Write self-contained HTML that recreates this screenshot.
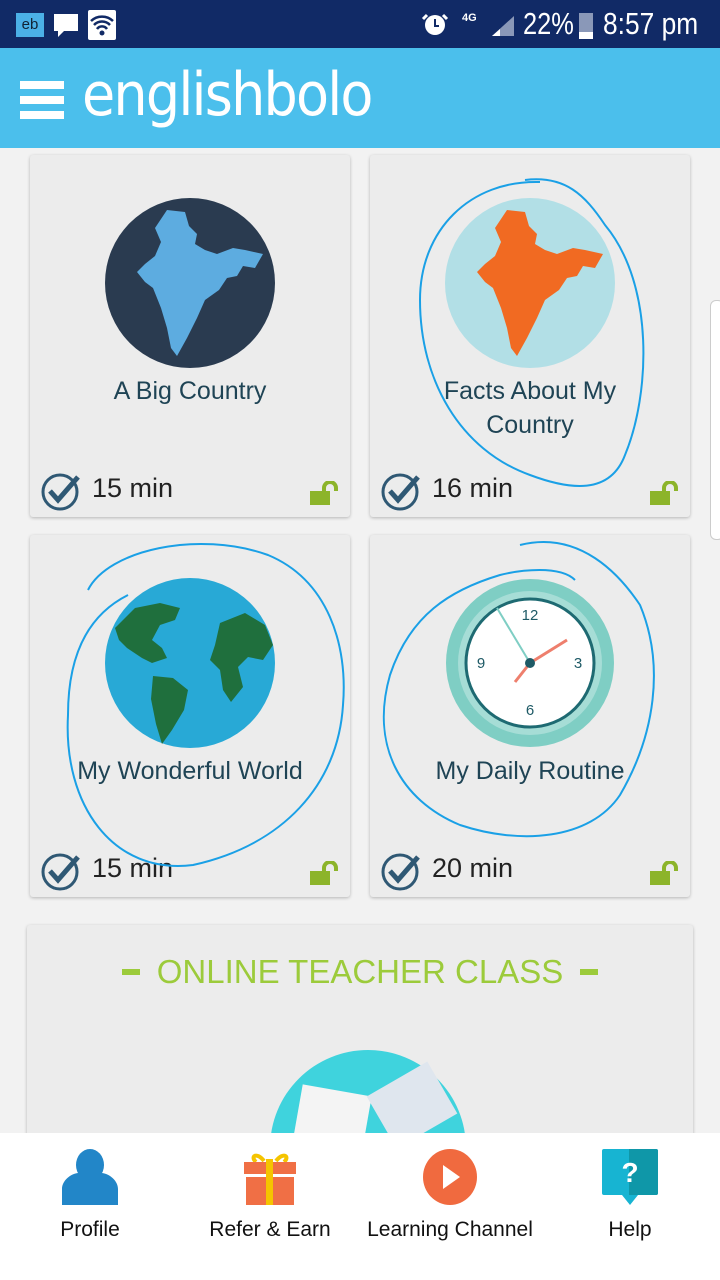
<!DOCTYPE html>
<html><head><meta charset="utf-8"><style>
*{margin:0;padding:0;box-sizing:border-box}
body{width:720px;height:1280px;overflow:hidden;background:#f2f2f2;font-family:"Liberation Sans",sans-serif;position:relative}
.sb{position:absolute;top:0;left:0;width:720px;height:48px;background:#112a66;color:#fff}
.hd{position:absolute;top:48px;left:0;width:720px;height:100px;background:#4bbfec}
.card{position:absolute;width:320px;height:362px;background:#ececec;border-radius:3px;box-shadow:0 1px 3px rgba(0,0,0,.25)}
.t{position:absolute;left:0;width:100%;text-align:center;color:#1f4455;font-size:25px;line-height:34px}
.min{position:absolute;left:62px;top:318px;font-size:27px;color:#222}
.chk{position:absolute;left:10px;top:316px}
.lock{position:absolute;right:10px;top:326px}
.nav{position:absolute;top:1133px;left:0;width:720px;height:147px;background:#fff}
.nl{position:absolute;top:85px;font-size:21px;color:#111;text-align:center;width:200px}
</style></head><body>
<div class="sb">
<div style="position:absolute;left:16px;top:13px;width:28px;height:24px;background:#4bb0e6;color:#123;font-size:15px;text-align:center;line-height:24px">eb</div>
<svg style="position:absolute;left:52px;top:12px" width="28" height="28"><path d="M2 2h24v17H12l-6 6v-6H2z" fill="#fff"/></svg>
<svg style="position:absolute;left:88px;top:10px" width="28" height="30"><rect width="28" height="30" rx="2" fill="#fff"/><path d="M3 11a16 16 0 0 1 22 0M6 15a11 11 0 0 1 16 0M9 19a6 6 0 0 1 10 0" stroke="#112a66" stroke-width="2.5" fill="none"/><circle cx="14" cy="23" r="2.5" fill="#112a66"/></svg>
<svg style="position:absolute;left:421px;top:10px" width="28" height="28"><circle cx="14" cy="15" r="10" fill="#fff"/><path d="M6 5l-4 4M22 5l4 4" stroke="#fff" stroke-width="3"/><path d="M14 9v7h4" stroke="#112a66" stroke-width="2" fill="none"/></svg>
<div style="position:absolute;left:462px;top:12px;font-size:11px;font-weight:bold">4G</div>
<svg style="position:absolute;left:490px;top:14px" width="26" height="24"><path d="M2 22L24 2v20z" fill="#8a98b8"/><path d="M2 22l8-7v7z" fill="#fff"/></svg>
<div style="position:absolute;left:523px;top:6px;font-size:31px;transform:scaleX(.82);transform-origin:left">22%</div>
<div style="position:absolute;left:579px;top:13px;width:14px;height:26px;background:#8a98b8"><div style="position:absolute;bottom:0;width:14px;height:7px;background:#fff"></div></div>
<div style="position:absolute;left:603px;top:6px;font-size:31px;transform:scaleX(.85);transform-origin:left">8:57 pm</div>
</div>
<div class="hd">
<div style="position:absolute;left:20px;top:33px;width:44px;height:8px;background:#fff"></div>
<div style="position:absolute;left:20px;top:48px;width:44px;height:8px;background:#fff"></div>
<div style="position:absolute;left:20px;top:63px;width:44px;height:8px;background:#fff"></div>
<div style="position:absolute;left:82px;top:12px;font-size:60px;color:#fff;font-family:'DejaVu Sans',sans-serif;letter-spacing:-2px;transform:scaleX(.9);transform-origin:left">englishbolo</div>
</div>

<div class="card" style="left:30px;top:155px">
<svg style="position:absolute;left:75px;top:43px" width="170" height="170"><circle cx="85" cy="85" r="85" fill="#2a3b50"/><path d="M62 12L80 14L84 28L92 36L90 46L100 52L112 56L128 50L140 52L158 56L150 70L138 68L132 78L122 80L114 92L100 102L92 120L82 140L72 158L66 150L62 130L56 110L48 90L40 84L32 74L40 66L50 58L56 44L50 30Z" fill="#5dace0"/></svg>
<div class="t" style="top:219px">A Big Country</div>
<svg class="chk" width="42" height="40"><circle cx="20" cy="21" r="17" fill="none" stroke="#2f5874" stroke-width="3"/><path d="M10 20l8 9L38 6" stroke="#2f5874" stroke-width="5" fill="none"/></svg>
<div class="min">15 min</div>
<svg class="lock" width="30" height="24"><rect x="0" y="10" width="20" height="14" fill="#8cb42a"/><path d="M14 11V7a6 6 0 0 1 12 0v3" stroke="#8cb42a" stroke-width="4" fill="none"/></svg>
</div>

<div class="card" style="left:370px;top:155px">
<svg style="position:absolute;left:75px;top:43px" width="170" height="170"><circle cx="85" cy="85" r="85" fill="#b2dfe6"/><path d="M62 12L80 14L84 28L92 36L90 46L100 52L112 56L128 50L140 52L158 56L150 70L138 68L132 78L122 80L114 92L100 102L92 120L82 140L72 158L66 150L62 130L56 110L48 90L40 84L32 74L40 66L50 58L56 44L50 30Z" fill="#f16a22"/></svg>
<div class="t" style="top:219px">Facts About My<br>Country</div>
<svg class="chk" width="42" height="40"><circle cx="20" cy="21" r="17" fill="none" stroke="#2f5874" stroke-width="3"/><path d="M10 20l8 9L38 6" stroke="#2f5874" stroke-width="5" fill="none"/></svg>
<div class="min">16 min</div>
<svg class="lock" width="30" height="24"><rect x="0" y="10" width="20" height="14" fill="#8cb42a"/><path d="M14 11V7a6 6 0 0 1 12 0v3" stroke="#8cb42a" stroke-width="4" fill="none"/></svg>
</div>

<div class="card" style="left:30px;top:535px">
<svg style="position:absolute;left:75px;top:43px" width="170" height="170"><circle cx="85" cy="85" r="85" fill="#28a9d6"/><path d="M10 50l20-20 25-5 20 5-5 12-15 5-8 15 10 8 5 10-15 5-10 -5-15-10-8-8z" fill="#1f6f3d"/><path d="M48 98l20 2 15 12-4 20-12 20-10 14-6-20-5-25z" fill="#1f6f3d"/><path d="M115 45l25-10 20 12 8 20-10 15-15-3-10 10 5 20-12 15-8-12-3-20-10-10 5-15z" fill="#1f6f3d"/></svg>
<div class="t" style="top:219px">My Wonderful World</div>
<svg class="chk" width="42" height="40"><circle cx="20" cy="21" r="17" fill="none" stroke="#2f5874" stroke-width="3"/><path d="M10 20l8 9L38 6" stroke="#2f5874" stroke-width="5" fill="none"/></svg>
<div class="min">15 min</div>
<svg class="lock" width="30" height="24"><rect x="0" y="10" width="20" height="14" fill="#8cb42a"/><path d="M14 11V7a6 6 0 0 1 12 0v3" stroke="#8cb42a" stroke-width="4" fill="none"/></svg>
</div>

<div class="card" style="left:370px;top:535px">
<svg style="position:absolute;left:75px;top:43px" width="170" height="170"><circle cx="85" cy="85" r="84" fill="#7fcec4"/><circle cx="85" cy="85" r="72" fill="#a6ddd6"/><circle cx="85" cy="85" r="64" fill="#fff" stroke="#1e6a72" stroke-width="3"/>
<text x="85" y="42" font-size="15" text-anchor="middle" fill="#1e5a66" font-family="Liberation Sans">12</text><text x="85" y="137" font-size="15" text-anchor="middle" fill="#1e5a66" font-family="Liberation Sans">6</text><text x="36" y="90" font-size="15" text-anchor="middle" fill="#1e5a66" font-family="Liberation Sans">9</text><text x="133" y="90" font-size="15" text-anchor="middle" fill="#1e5a66" font-family="Liberation Sans">3</text>
<path d="M85 85L52 30" stroke="#7fcec4" stroke-width="2"/><path d="M85 85L122 62M85 85L70 104" stroke="#ee7f6d" stroke-width="3"/><circle cx="85" cy="85" r="5" fill="#1e5a66"/></svg>
<div class="t" style="top:219px">My Daily Routine</div>
<svg class="chk" width="42" height="40"><circle cx="20" cy="21" r="17" fill="none" stroke="#2f5874" stroke-width="3"/><path d="M10 20l8 9L38 6" stroke="#2f5874" stroke-width="5" fill="none"/></svg>
<div class="min">20 min</div>
<svg class="lock" width="30" height="24"><rect x="0" y="10" width="20" height="14" fill="#8cb42a"/><path d="M14 11V7a6 6 0 0 1 12 0v3" stroke="#8cb42a" stroke-width="4" fill="none"/></svg>
</div>

<div class="card" style="left:27px;top:925px;width:666px;height:260px;overflow:hidden">
<div style="position:absolute;left:95px;top:44px;width:18px;height:6px;background:#9ccb3b"></div>
<div style="position:absolute;left:553px;top:44px;width:18px;height:6px;background:#9ccb3b"></div>
<div style="position:absolute;top:28px;width:100%;text-align:center;font-size:33px;color:#9ccb3b">ONLINE TEACHER CLASS</div>
<div style="position:absolute;left:243px;top:125px;width:196px;height:196px;border-radius:50%;background:#3fd3dd"></div>
<div style="position:absolute;left:270px;top:165px;width:70px;height:60px;background:#f4f4f4;transform:rotate(10deg)"></div>
<div style="position:absolute;left:350px;top:150px;width:70px;height:60px;background:#dfe6ee;transform:rotate(-30deg)"></div>
</div>

<svg style="position:absolute;left:0;top:0" width="720" height="1280"><g fill="none" stroke="#1aa0e6" stroke-width="2">
<path d="M540 182C470 180 420 230 420 300c0 80 40 150 110 175 40 15 80 20 95-20 25-60 30-170-20-230-20-30-40-50-80-45"/>
<path d="M88 590c20-40 110-60 180-35 60 25 80 90 75 150-5 80-60 140-150 160-80 10-130-60-125-150 0-60 20-100 60-120"/>
<path d="M520 545c60-15 100 30 120 60 25 60 15 130-20 190-30 45-100 50-160 30-60-25-90-80-70-150 20-60 60-85 110-100 20-5 60-10 75 5"/>
</g></svg>

<div style="position:absolute;left:710px;top:300px;width:14px;height:240px;border:1px solid #ccc;border-radius:6px;background:#fff"></div>

<div class="nav">
<svg style="position:absolute;left:62px;top:16px" width="56" height="56"><ellipse cx="28" cy="16" rx="14" ry="16" fill="#2286c8"/><path d="M0 56V40c0-8 8-15 16-16 6 3 18 3 24 0 8 1 16 8 16 16v16z" fill="#2286c8"/></svg>
<svg style="position:absolute;left:242px;top:16px" width="56" height="56"><path d="M22 12c-8-10-14-4-8 1M34 12c8-10 14-4 8 1" stroke="#f5c400" stroke-width="4" fill="none"/><rect x="2" y="13" width="52" height="12" fill="#f06f45"/><rect x="4" y="28" width="48" height="28" fill="#f06f45"/><rect x="24" y="10" width="7" height="46" fill="#f5c400"/></svg>
<svg style="position:absolute;left:422px;top:16px" width="56" height="56"><ellipse cx="28" cy="28" rx="27" ry="28" fill="#f06a3f"/><path d="M21 16v24l17-12z" fill="#fff"/></svg>
<svg style="position:absolute;left:602px;top:16px" width="56" height="60"><rect width="56" height="46" rx="2" fill="#17b4d2"/><path d="M27 0h27a2 2 0 0 1 2 2v42a2 2 0 0 1-2 2H27z" fill="#0f97a8"/><path d="M20 46h16l-8 10z" fill="#17b4d2"/><text x="28" y="33" font-size="28" font-weight="bold" fill="#fff" text-anchor="middle" font-family="Liberation Sans">?</text></svg>
<div class="nl" style="left:-10px">Profile</div>
<div class="nl" style="left:170px">Refer &amp; Earn</div>
<div class="nl" style="left:350px">Learning Channel</div>
<div class="nl" style="left:530px">Help</div>
</div>
</body></html>
